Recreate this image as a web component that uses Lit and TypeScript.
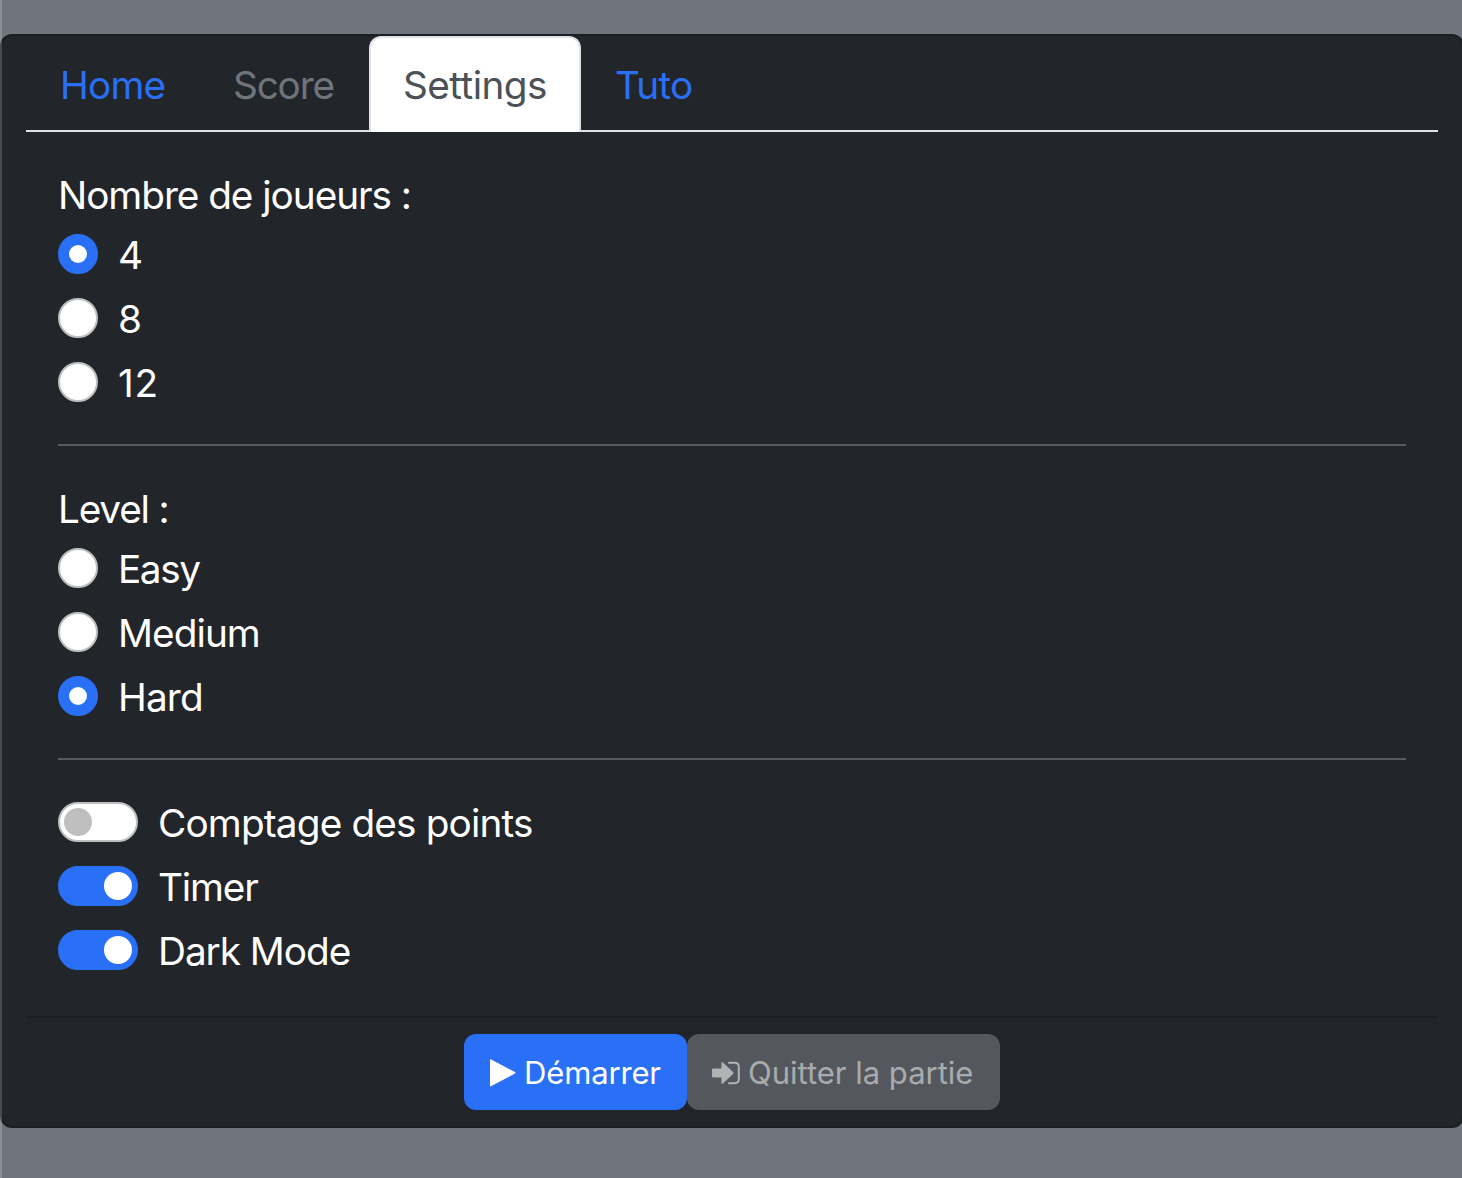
import { LitElement, html, css } from "lit";
import { classMap } from "lit/directives/class-map.js";

type Track = "wide" | "t50" | "t75" | "t85" | "t95" | "t105" | "t120" | "t145";
interface Option {
  label: string;
  on: boolean;
  track: Track;
}

const tabs = [
  { label: "Home", kind: "home", track: "t75" },
  { label: "Score", kind: "score", track: "t120" },
  { label: "Settings", kind: "settings", track: "t50" },
  { label: "Tuto", kind: "tuto", track: "t75" },
];

const players: Option[] = [
  { label: "4", on: true, track: "wide" },
  { label: "8", on: false, track: "wide" },
  { label: "12", on: false, track: "wide" },
];

const levels: Option[] = [
  { label: "Easy", on: false, track: "t145" },
  { label: "Medium", on: false, track: "t95" },
  { label: "Hard", on: true, track: "t85" },
];

const switches: Option[] = [
  { label: "Comptage des points", on: false, track: "t85" },
  { label: "Timer", on: true, track: "t120" },
  { label: "Dark Mode", on: true, track: "t105" },
];

class AppRoot extends LitElement {
  static styles = css`
    * { box-sizing: border-box; }
    :host {
      display: block;
      position: relative;
      height: 1178px;
      padding-top: 34px;
      overflow: hidden;
      box-sizing: border-box;
      background: #6e757c;
      color: #fff;
      font-family: Inter, "Liberation Sans", sans-serif;
      font-size: 38.75px;
      line-height: 60px;
      white-space: nowrap;
    }
    .edge {
      position: absolute;
      left: 0;
      top: 0;
      width: 2px;
      height: 100%;
      background: rgba(255, 255, 255, 0.2);
    }
    .card {
      display: flex;
      flex-direction: column;
      width: 1464px;
      height: 1094px;
      padding: 0 24px;
      background: #222529;
      border: 2px solid #1c1f22;
      border-radius: 12px;
    }
    .tabs {
      display: flex;
      flex: none;
      height: 96px;
      border-bottom: 2px solid #dfe2e6;
    }
    .tab {
      height: 96px;
      padding: 17px 0 0 32px;
      border: 2px solid transparent;
      border-bottom: 0;
      border-radius: 12px 12px 0 0;
      color: #2970f6;
    }
    .tab > span { display: block; }
    .home { width: 173px; }
    .score { width: 170px; color: #6e757c; }
    .settings {
      width: 212px;
      color: #4b5157;
      background: #fff;
      border-color: #dfe2e6;
    }
    .tuto { width: 144px; }
    .wide { letter-spacing: 0.7px; }
    .t50 { letter-spacing: -0.55px; }
    .t75 { letter-spacing: -0.8px; }
    .t85 { letter-spacing: -0.85px; }
    .t95 { letter-spacing: -0.95px; }
    .t105 { letter-spacing: -1.05px; }
    .t120 { letter-spacing: -1.2px; }
    .t145 { letter-spacing: -1.45px; }
    .body { flex: 1; padding: 34px 32px 0; }
    .title { display: flex; height: 60px; }
    .title span { margin-top: -1px; }
    .row {
      display: flex;
      height: 60px;
      margin-bottom: 4px;
      align-items: flex-start;
    }
    .row > span { margin-top: -1px; margin-left: 20px; }
    .radio, .switch {
      display: flex;
      flex: none;
      align-items: center;
      width: 40px;
      height: 40px;
      margin-top: 8px;
      border: 2px solid #bfbfbf;
      border-radius: 20px;
      background: #fff;
    }
    .radio { justify-content: center; }
    .switch { width: 80px; padding: 0 4px; }
    .on { background: #2970f6; border-color: #2970f6; }
    .switch.on { justify-content: flex-end; }
    .dot { width: 18px; height: 18px; border-radius: 50%; background: #fff; }
    .knob { width: 28px; height: 28px; border-radius: 50%; background: #bfbfbf; }
    .on .knob { background: #fff; }
    .rule { height: 2px; margin: 30px 0 34px; background: #595c5f; }
    .footer {
      display: flex;
      flex: none;
      justify-content: center;
      height: 110px;
      padding-top: 16px;
      background: #212428;
      border-top: 2px solid #1c1f22;
      font-size: 31px;
      line-height: 76px;
    }
    .btn {
      display: flex;
      align-items: center;
      height: 76px;
      padding-top: 1px;
      border-radius: 12px;
      background: #2970f6;
    }
    .btn span { padding-top: 1px; }
    .start { width: 223px; padding-left: 26px; letter-spacing: -0.15px; }
    .quit {
      width: 313px;
      padding-left: 25px;
      background: #54585e;
      color: #a9abad;
    }
    svg { display: block; flex: none; }
    .start svg { margin-right: 8px; }
    .quit svg { margin-right: 8px; }
  `;

  private text(t: string, track: string) {
    return html`<span class=${track}>${t}</span>`;
  }

  private radio(o: Option) {
    return html`<div class="row">
      <i class=${classMap({ radio: true, on: o.on })}>${o.on ? html`<i class="dot"></i>` : ""}</i>
      ${this.text(o.label, o.track)}
    </div>`;
  }

  private toggle(o: Option) {
    return html`<div class="row">
      <i class=${classMap({ switch: true, on: o.on })}><i class="knob"></i></i>
      ${this.text(o.label, o.track)}
    </div>`;
  }

  render() {
    return html`
      <div class="card">
        <nav class="tabs">
          ${tabs.map((t) => html`<div class="tab ${t.kind}">${this.text(t.label, t.track)}</div>`)}
        </nav>
        <div class="body">
          <div class="title">${this.text("Nombre de joueurs :", "t105")}</div>
          ${players.map((o) => this.radio(o))}
          <div class="rule"></div>
          <div class="title">${this.text("Level :", "t120")}</div>
          ${levels.map((o) => this.radio(o))}
          <div class="rule"></div>
          ${switches.map((o) => this.toggle(o))}
        </div>
        <div class="footer">
          <div class="btn start">
            <svg width="26" height="28" viewBox="0 0 26 28" fill="#fff">
              <path d="M0.8 0.3 25 13.1Q26 13.8 25 14.5L0.8 27.3Q0 27.6 0 26.8V0.8Q0 0 .8.3Z" />
            </svg>
            <span>Démarrer</span>
          </div>
          <div class="btn quit">
            <svg width="28" height="24" viewBox="0 0 28 24" fill="#b1b2b4">
              <path d="M1.3 7.6H9.4V2.2Q9.4.2 10.9 1.5L21.3 11.2Q22 12 21.3 12.8L10.9 22.5Q9.4 23.8 9.4 21.8V16.6H1.3Q0 16.6 0 15.3V8.9Q0 7.6 1.3 7.6Z" />
              <path d="M17 1.7H22.6Q26.8 1.7 26.8 5.9V18.1Q26.8 22.3 22.6 22.3H17" fill="none" stroke="#b1b2b4" stroke-width="2" stroke-linecap="round" />
            </svg>
            <span>Quitter la partie</span>
          </div>
        </div>
      </div>
      <div class="edge"></div>
    `;
  }
}
customElements.define("app-root", AppRoot);
